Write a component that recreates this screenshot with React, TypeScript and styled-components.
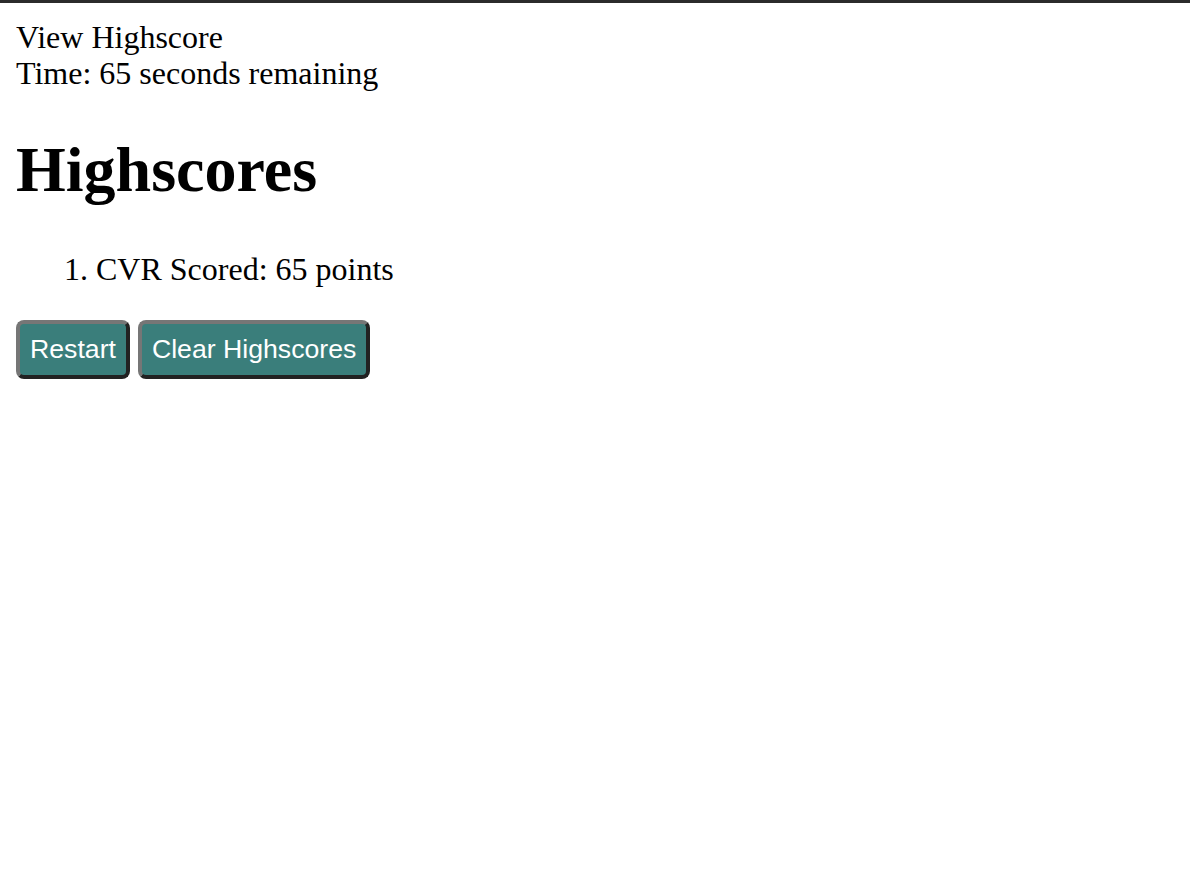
import * as React from "react"
import styled, { createGlobalStyle } from "styled-components"

const GlobalStyle = createGlobalStyle`
  html, body {
    background: #ffffff;
  }
  body {
    margin: 16px;
    font-family: "Liberation Serif", "Times New Roman", serif;
    font-size: 32px;
    color: #000000;
  }
`

const TopEdge = styled.div`
  position: fixed;
  top: 0;
  left: 0;
  right: 0;
  height: 3px;
  background-color: #2b2b2b;
`

const Header = styled.header`
  padding-top: 3px;
  line-height: 36px;
`

const HeaderLink = styled.div`
  cursor: pointer;
`

const Timer = styled.div``

const Title = styled.h1`
  font-size: 64px;
  font-weight: bold;
  margin: 42px 0 44px;
`

const ScoreList = styled.ol`
  margin: 32px 0;
  padding-left: 80px;
`

const ScoreItem = styled.li``

const Actions = styled.div``

const ActionButton = styled.button`
  font-family: "Liberation Sans", Arial, Helvetica, sans-serif;
  font-size: 26.67px;
  line-height: normal;
  color: #ffffff;
  background-color: #3a7e7b;
  padding: 10px 10px;
  border: 4px solid;
  border-color: #767676 #222222 #222222 #767676;
  border-radius: 8px;
  cursor: pointer;
`

const scores = [{ initials: "CVR", score: 65 }]

export default function App() {
  return (
    <>
      <GlobalStyle />
      <TopEdge />
      <Header>
        <HeaderLink>View Highscore</HeaderLink>
        <Timer>Time: 65 seconds remaining</Timer>
      </Header>
      <Title>Highscores</Title>
      <ScoreList>
        {scores.map((s) => (
          <ScoreItem key={s.initials}>
            {s.initials} Scored: {s.score} points
          </ScoreItem>
        ))}
      </ScoreList>
      <Actions>
        <ActionButton>Restart</ActionButton>{" "}
        <ActionButton>Clear Highscores</ActionButton>
      </Actions>
    </>
  )
}
